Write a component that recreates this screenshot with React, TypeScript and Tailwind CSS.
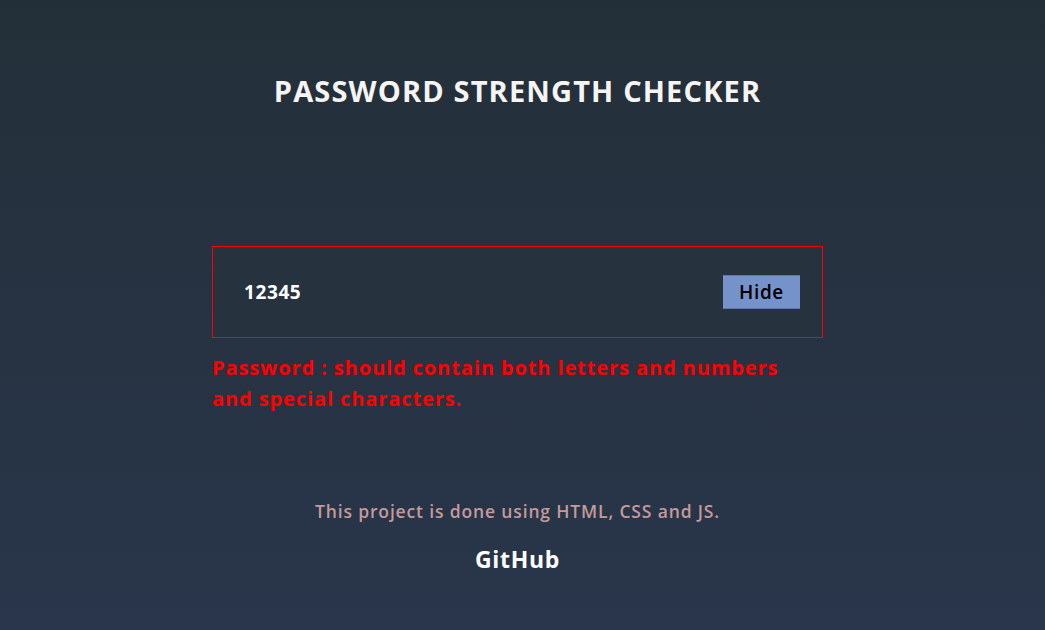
import React, { useState } from 'react';

export default function App() {
  const [password, setPassword] = useState('12345');
  const [visible, setVisible] = useState(true);

  return (
    <div className="min-h-[630px] w-full bg-gradient-to-b from-[#232f38] to-[#29364b] font-['Open_Sans',sans-serif] text-white">
      <div className="flex w-[1035px] flex-col items-center">
        <h1 className="mt-[71px] text-[29px] font-bold leading-[40px] tracking-[1.15px] text-[#f7f4f4]">
          PASSWORD STRENGTH CHECKER
        </h1>

        <div className="mt-[135px] w-[611px]">
          <div className="flex h-[92px] items-center justify-between border border-solid border-[#ff0000] bg-[#26333f] pl-[31px] pr-[22px]">
            <input
              type={visible ? 'text' : 'password'}
              value={password}
              onChange={(e) => setPassword(e.target.value)}
              className="w-[300px] bg-transparent text-[19px] font-bold tracking-[0.6px] text-white outline-none"
            />
            <button
              onClick={() => setVisible(!visible)}
              className="flex h-[34px] w-[77px] items-center justify-center border-b border-t border-[#5f7aae] bg-[#7592cb] text-[19px] font-semibold tracking-[0.6px] text-black"
            >
              {visible ? 'Hide' : 'Show'}
            </button>
          </div>
          <p className="mt-[14px] w-[590px] text-[20px] font-bold leading-[31px] tracking-[0.9px] text-[#ff0000]">
            Password : should contain both letters and numbers and special characters.
          </p>
        </div>

        <p className="mt-[84px] text-[17.5px] font-semibold tracking-[0.85px] text-[#c49a9c]">
          This project is done using HTML, CSS and JS.
        </p>
        <a className="mt-[18px] text-[23px] font-bold tracking-[0.7px] text-white">GitHub</a>
      </div>
    </div>
  );
}
